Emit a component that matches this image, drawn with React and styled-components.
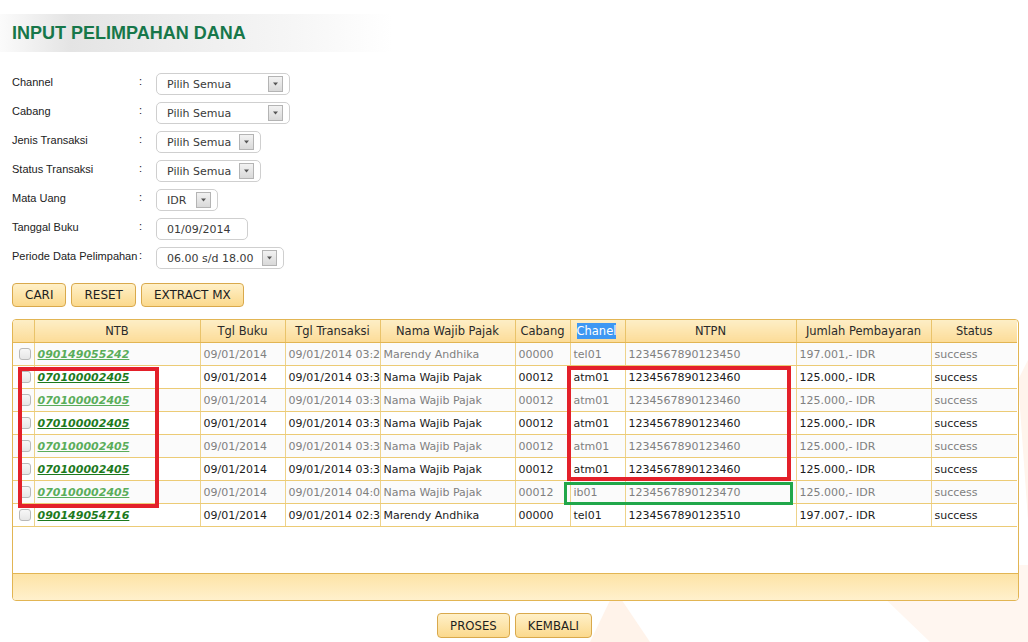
import React from "react";
import styled, { createGlobalStyle } from "styled-components";

const GlobalStyle = createGlobalStyle`
  html, body {
    margin: 0;
    padding: 0;
    background: #ffffff;
  }
  body {
    font-family: "DejaVu Sans", Verdana, sans-serif;
    font-size: 11px;
    color: #222;
  }
`;

const filters = [
  { label: "Channel", value: "Pilih Semua", width: 134, arrow: true },
  { label: "Cabang", value: "Pilih Semua", width: 134, arrow: true },
  { label: "Jenis Transaksi", value: "Pilih Semua", width: 105, arrow: true },
  { label: "Status Transaksi", value: "Pilih Semua", width: 105, arrow: true },
  { label: "Mata Uang", value: "IDR", width: 62, arrow: true },
  { label: "Tanggal Buku", value: "01/09/2014", width: 92, arrow: false },
  { label: "Periode Data Pelimpahan", value: "06.00 s/d 18.00", width: 128, arrow: true },
];

const columns = [
  { key: "check", title: "", width: 21 },
  { key: "ntb", title: "NTB", width: 166 },
  { key: "tglBuku", title: "Tgl Buku", width: 85 },
  { key: "tglTrx", title: "Tgl Transaksi", width: 95 },
  { key: "nama", title: "Nama Wajib Pajak", width: 135 },
  { key: "cabang", title: "Cabang", width: 55 },
  { key: "chanel", title: "Chanel", width: 55 },
  { key: "ntpn", title: "NTPN", width: 171 },
  { key: "jumlah", title: "Jumlah Pembayaran", width: 135 },
  { key: "status", title: "Status", width: 86 },
];

const atm = (muted) => ({
  muted,
  ntb: "070100002405",
  tglBuku: "09/01/2014",
  tglTrx: "09/01/2014 03:35",
  nama: "Nama Wajib Pajak",
  cabang: "00012",
  chanel: "atm01",
  ntpn: "1234567890123460",
  jumlah: "125.000,- IDR",
  status: "success",
});

const rows = [
  {
    muted: true,
    ntb: "090149055242",
    tglBuku: "09/01/2014",
    tglTrx: "09/01/2014 03:21",
    nama: "Marendy Andhika",
    cabang: "00000",
    chanel: "tel01",
    ntpn: "1234567890123450",
    jumlah: "197.001,- IDR",
    status: "success",
  },
  atm(false),
  atm(true),
  atm(false),
  atm(true),
  atm(false),
  {
    muted: true,
    ntb: "070100002405",
    tglBuku: "09/01/2014",
    tglTrx: "09/01/2014 04:02",
    nama: "Nama Wajib Pajak",
    cabang: "00012",
    chanel: "ib01",
    ntpn: "1234567890123470",
    jumlah: "125.000,- IDR",
    status: "success",
  },
  {
    muted: false,
    ntb: "090149054716",
    tglBuku: "09/01/2014",
    tglTrx: "09/01/2014 02:31",
    nama: "Marendy Andhika",
    cabang: "00000",
    chanel: "tel01",
    ntpn: "1234567890123510",
    jumlah: "197.007,- IDR",
    status: "success",
  },
];

const Page = styled.div`
  position: relative;
  min-height: 642px;
  padding: 14px 11px 0 12px;
  box-sizing: border-box;
  overflow: hidden;
`;

const Watermark = styled.svg`
  position: absolute;
  left: 0;
  top: 0;
  width: 1028px;
  height: 642px;
  z-index: 0;
  pointer-events: none;
`;

const Content = styled.div`
  position: relative;
  z-index: 1;
`;

const TitleBand = styled.div`
  margin-left: -12px;
  width: 392px;
  height: 38px;
  display: flex;
  align-items: center;
  padding-left: 12px;
  box-sizing: border-box;
  background: linear-gradient(
    90deg,
    #fbfbfb 0%,
    #e4e4e4 18%,
    #ededed 45%,
    #f6f6f6 75%,
    #ffffff 100%
  );
`;

const Title = styled.h1`
  margin: 0;
  font-family: "Liberation Sans", Arial, sans-serif;
  font-size: 18px;
  font-weight: bold;
  color: #17774a;
`;

const Form = styled.div`
  margin-top: 21px;
  display: grid;
  grid-template-columns: 127px 17px auto;
  grid-auto-rows: 29px;
`;

const Label = styled.div`
  font-family: "Liberation Sans", Arial, sans-serif;
  font-size: 11px;
  color: #222;
  padding-top: 3px;
`;

const Colon = styled.div`
  font-family: "Liberation Sans", Arial, sans-serif;
  font-size: 11px;
  color: #222;
  padding-top: 2px;
`;

const Select = styled.div`
  width: ${(p) => p.$width}px;
  height: 22px;
  box-sizing: border-box;
  border: 1px solid #cfcfcf;
  border-radius: 5px;
  background: #fff;
  display: flex;
  align-items: center;
  padding: 0 6px 0 10px;
  gap: 6px;
  font-size: 11px;
  color: #3a3a3a;
`;

const SelectText = styled.span`
  flex: 1;
  white-space: nowrap;
`;

const ArrowBox = styled.span`
  width: 15px;
  height: 16px;
  box-sizing: border-box;
  border: 1px solid #b4b4b4;
  background: linear-gradient(#f2f2f2, #d9d9d9);
  display: flex;
  align-items: center;
  justify-content: center;
  flex: none;
`;

const ButtonRow = styled.div`
  display: flex;
  gap: 5px;
  margin-top: ${(p) => p.$top}px;
  justify-content: ${(p) => (p.$center ? "center" : "flex-start")};
`;

const Button = styled.button`
  height: ${(p) => (p.$narrow ? 25 : 24)}px;
  padding: 0 ${(p) => (p.$narrow ? 12 : 12)}px;
  border: 1px solid #d9a94c;
  border-radius: 4px;
  background: linear-gradient(#fff0c8, #fbd98d);
  color: #1e1e1e;
  font-family: "DejaVu Sans", Verdana, sans-serif;
  font-size: ${(p) => (p.$narrow ? 13 : 12)}px;
  font-stretch: ${(p) => (p.$narrow ? "condensed" : "normal")};
  cursor: pointer;
`;

const TableBox = styled.div`
  position: relative;
  margin-top: 12px;
  width: 1005px;
  border: 1px solid #e2b553;
  border-radius: 4px;
  background: #fff;
  overflow: hidden;
`;

const Table = styled.table`
  width: 1004px;
  table-layout: fixed;
  border-collapse: collapse;
`;

const Th = styled.th`
  height: 22px;
  padding: 0;
  font-weight: normal;
  font-size: 11.5px;
  color: #2a2a2a;
  background: linear-gradient(#fdeec6, #fcdc98);
  border-right: 1px solid #e9c36a;
  border-bottom: 1px solid #e2b553;
  text-align: ${(p) => (p.$left ? "left" : "center")};
  padding-left: ${(p) => (p.$left ? 6 : 0)}px;
  &:last-child {
    border-right: none;
  }
`;

const Selected = styled.span`
  background: #3d97f3;
  color: #fff;
  padding: 1px 0;
`;

const Td = styled.td`
  height: 22px;
  padding: 0 0 0 3px;
  white-space: nowrap;
  overflow: hidden;
  font-size: 11px;
  color: ${(p) => (p.$muted ? "#808080" : "#1c1c1c")};
  background: ${(p) => (p.$muted ? "#fbfbfb" : "#ffffff")};
  border-right: 1px solid #eed38a;
  border-bottom: 1px solid #eccb76;
  &:last-child {
    border-right: none;
  }
`;

const Check = styled.span`
  display: block;
  width: 10px;
  height: 10px;
  margin-left: 3px;
  border: 1px solid #b9b9b9;
  border-radius: 3px;
  background: linear-gradient(#f7f7f7, #e6e6e6);
`;

const Link = styled.a`
  font-weight: bold;
  font-style: italic;
  text-decoration: underline;
  color: ${(p) => (p.$muted ? "#5aad5a" : "#1d7a1d")};
  cursor: pointer;
`;

const EmptyArea = styled.div`
  height: 46px;
`;

const Footer = styled.div`
  height: 26px;
  border-top: 1px solid #e2b553;
  background: linear-gradient(#fde3a6, #fff0cd);
`;

const Mark = styled.div`
  position: absolute;
  left: ${(p) => p.$x}px;
  top: ${(p) => p.$y}px;
  width: ${(p) => p.$w}px;
  height: ${(p) => p.$h}px;
  box-sizing: border-box;
  border: ${(p) => (p.$green ? "3px solid #21a74a" : "4px solid #e3202a")};
  pointer-events: none;
`;

const Arrow = () => (
  <svg width="7" height="4" viewBox="0 0 7 4">
    <path d="M1 0.5 L3.5 3.5 L6 0.5 Z" fill="#555" />
  </svg>
);

export default function App() {
  return (
    <>
      <GlobalStyle />
      <Page>
        <Watermark viewBox="0 0 1028 642">
          <polygon points="590,642 615,590 650,642" fill="#fff3ea" />
          <polygon points="850,565 1028,565 1028,642 930,642" fill="#fff6f0" />
          <polygon points="1018,380 1028,360 1028,520" fill="#fff4ec" />
        </Watermark>
        <Content>
          <TitleBand>
            <Title>INPUT PELIMPAHAN DANA</Title>
          </TitleBand>

          <Form>
            {filters.map((f) => (
              <React.Fragment key={f.label}>
                <Label>{f.label}</Label>
                <Colon>:</Colon>
                <div>
                  <Select $width={f.width}>
                    <SelectText>{f.value}</SelectText>
                    {f.arrow && (
                      <ArrowBox>
                        <Arrow />
                      </ArrowBox>
                    )}
                  </Select>
                </div>
              </React.Fragment>
            ))}
          </Form>

          <ButtonRow $top={7}>
            <Button>CARI</Button>
            <Button>RESET</Button>
            <Button>EXTRACT MX</Button>
          </ButtonRow>

          <TableBox>
            <Table>
              <colgroup>
                {columns.map((c) => (
                  <col key={c.key} style={{ width: c.width }} />
                ))}
              </colgroup>
              <thead>
                <tr>
                  {columns.map((c) =>
                    c.key === "chanel" ? (
                      <Th key={c.key} $left>
                        <Selected>{c.title}</Selected>
                      </Th>
                    ) : (
                      <Th key={c.key}>{c.title}</Th>
                    )
                  )}
                </tr>
              </thead>
              <tbody>
                {rows.map((r, i) => (
                  <tr key={i}>
                    <Td $muted={r.muted}>
                      <Check />
                    </Td>
                    <Td $muted={r.muted}>
                      <Link $muted={r.muted}>{r.ntb}</Link>
                    </Td>
                    <Td $muted={r.muted}>{r.tglBuku}</Td>
                    <Td $muted={r.muted}>{r.tglTrx}</Td>
                    <Td $muted={r.muted}>{r.nama}</Td>
                    <Td $muted={r.muted}>{r.cabang}</Td>
                    <Td $muted={r.muted}>{r.chanel}</Td>
                    <Td $muted={r.muted}>{r.ntpn}</Td>
                    <Td $muted={r.muted}>{r.jumlah}</Td>
                    <Td $muted={r.muted}>{r.status}</Td>
                  </tr>
                ))}
              </tbody>
            </Table>
            <EmptyArea />
            <Footer />
            <Mark $x={5} $y={47} $w={141} $h={141} />
            <Mark $x={554} $y={46} $w={224} $h={115} />
            <Mark $green $x={551} $y={162} $w={229} $h={23} />
          </TableBox>

          <ButtonRow $center $top={12}>
            <Button $narrow>PROSES</Button>
            <Button $narrow>KEMBALI</Button>
          </ButtonRow>
        </Content>
      </Page>
    </>
  );
}
